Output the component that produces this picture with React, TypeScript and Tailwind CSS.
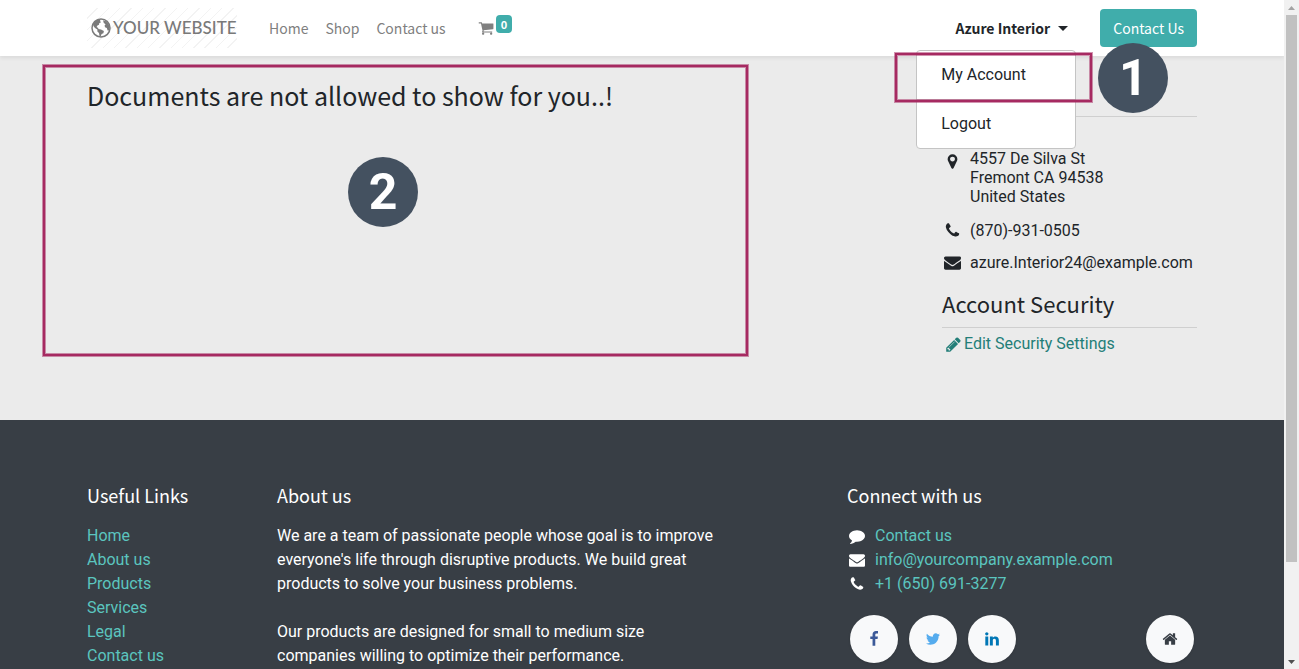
import React from "react";

const ICONS = {
  home: "M1472 992v480q0 26-19 45t-45 19h-384v-384h-256v384h-384q-26 0-45-19t-19-45v-480q0-1 .5-3t.5-3l575-474 575 474q1 2 1 6zm223-69l-62 74q-8 9-21 11h-3q-13 0-21-7l-692-577-692 577q-12 8-24 7-13-2-21-11l-62-74q-8-10-7-23.5t11-21.5l719-599q32-26 76-26t76 26l244 204v-195q0-14 9-23t23-9h192q14 0 23 9t9 23v408l219 182q10 8 11 21.5t-7 23.5z",
  envelope:
    "M1792 710v794q0 66-47 113t-113 47h-1472q-66 0-113-47t-47-113v-794q44 49 101 87 362 246 497 345 57 42 92.5 65.5t94.5 48 110 24.5h2q51 0 110-24.5t94.5-48 92.5-65.5q170-123 498-345 57-39 100-87zm0-294q0 79-49 151t-122 123q-376 261-468 325-10 7-42.5 31t-54 38.5-52 32.5-57.5 27-50 9h-2q-23 0-50-9t-57.5-27-52-32.5-54-38.5-42.5-31q-91-64-262-182.5t-205-142.5q-62-42-117-115.5t-55-136.5q0-78 41.5-130t118.5-52h1472q65 0 112.5 47t47.5 113z",
  phone:
    "M1600 1240q0 27-10 70.5t-21 68.5q-21 50-122 106-94 51-186 51-27 0-52.5-3.5t-57.5-12.5-47.5-14.5-55.5-20.5-49-18q-98-35-175-83-128-79-264.5-215.5t-215.5-264.5q-48-77-83-175-3-9-18-49t-20.5-55.5-14.5-47.5-12.5-57.5-3.5-52.5q0-92 51-186 56-101 106-122 25-11 68.5-21t70.5-10q14 0 21 3 18 6 53 76 11 19 30 54t35 63.5 31 53.5q3 4 17.5 25t21.5 35.5 7 28.5q0 20-28.5 50t-62 55-62 53-28.5 46q0 9 5 22.5t8.5 20.5 14 24 11.5 19q76 137 174 235t235 174q2 1 19 11.5t24 14 20.5 8.5 22.5 5q18 0 46-28.5t53-62 55-62 50-28.5q14 0 28.5 7t35.5 21.5 25 17.5q25 15 53.5 31t63.5 35 54 30q70 35 76 53 3 7 3 21z",
  marker:
    "M1152 640q0-106-75-181t-181-75-181 75-75 181 75 181 181 75 181-75 75-181zm256 0q0 109-33 179l-364 774q-16 33-47.5 52t-67.5 19-67.5-19-46.5-52l-365-774q-33-70-33-179 0-212 150-362t362-150 362 150 150 362z",
  comment:
    "M1792 896q0 174-120 321.5t-326 233-450 85.5q-70 0-145-8-198 175-460 242-49 14-114 22-17 2-30.5-9t-17.5-29v-1q-3-4-.5-12t2-10 4.5-9.5l6-9 7-8.5 8-9q7-8 31-34.5t34.5-38 31-39.5 32.5-51 27-59 26-76q-157-89-247.5-220t-90.5-281q0-130 71-248.5t191-204.5 286-136.5 348-50.5 348 50.5 286 136.5 191 204.5 71 248.5z",
  pencil:
    "M491 1536l91-91-235-235-91 91v107h128v128h107zm523-928q0-22-22-22-10 0-17 7l-542 542q-7 7-7 17 0 22 22 22 10 0 17-7l542-542q7-7 7-17zm-54-192l416 416-832 832h-416v-416zm683 96q0 53-37 90l-166 166-416-416 166-165q36-38 90-38 53 0 91 38l235 234q37 39 37 91z",
  cart: "M704 1536q0 52-38 90t-90 38-90-38-38-90 38-90 90-38 90 38 38 90zm896 0q0 52-38 90t-90 38-90-38-38-90 38-90 90-38 90 38 38 90zm128-1088v512q0 24-16.5 42.5t-40.5 21.5l-1044 122q13 60 13 70 0 16-24 64h920q26 0 45 19t19 45-19 45-45 19h-1024q-26 0-45-19t-19-45q0-11 8-31.5t16-36 21.5-40 15.5-29.5l-177-823h-204q-26 0-45-19t-19-45 19-45 45-19h256q16 0 28.5 6.5t19.5 15.5 13 24.5 8 26 5.5 29.5 4.5 26h1201q26 0 45 19t19 45z",
  twitter:
    "M1684 408q-67 98-162 167 1 14 1 42 0 130-38 259.5t-115.5 248.5-184.5 210.5-258 146-323 54.5q-271 0-496-145 35 4 78 4 225 0 401-138-105-2-188-64.5t-114-159.5q33 5 61 5 43 0 85-11-112-23-185.5-111.5t-73.5-205.5v-4q68 38 146 41-66-44-105-115t-39-154q0-88 44-163 121 149 294.5 238.5t371.5 99.5q-8-38-8-74 0-134 94.5-228.5t228.5-94.5q140 0 236 102 109-21 205-78-37 115-142 178 93-10 186-50z",
  facebook:
    "M1343 12v264h-157q-86 0-116 36t-30 108v189h293l-39 296h-254v759h-306v-759h-255v-296h255v-218q0-186 104-288.5t277-102.5q147 0 228 12z",
  linkedin:
    "M477 625v991h-330v-991h330zm21-306q1 73-50.5 122t-135.5 49h-2q-82 0-132-49t-50-122q0-74 51.5-122.5t134.5-48.5 133 48.5 51 122.5zm1166 729v568h-329v-530q0-105-40.5-164.5t-126.5-59.5q-63 0-105.5 34.5t-63.5 85.5q-11 30-11 81v553h-329q2-399 2-647t-1-296l-1-48h329v144h-2q20-32 41-56t56.5-52 87-43.5 114.5-15.5q171 0 275 113.5t104 332.5z",
};

function Icon({ name, className = "size-4" }: { name: keyof typeof ICONS; className?: string }) {
  return (
    <svg viewBox="0 0 1792 1792" className={`shrink-0 ${className}`} fill="currentColor" aria-hidden="true">
      <path d={ICONS[name]} />
    </svg>
  );
}

const HEADING = "font-['Noto_Sans_CJK_SC',sans-serif]";

function Logo() {
  return (
    <a
      href="#"
      className="flex h-10 w-[150px] items-center gap-[2px] bg-[repeating-linear-gradient(135deg,#fff_0px,#fff_7px,#f3f3f3_7px,#f3f3f3_8px)] pl-1 font-['Lato',sans-serif] text-[17px] text-[#797979]"
    >
      <svg viewBox="0 0 20 20" className="size-5 shrink-0" aria-hidden="true">
        <circle cx="10" cy="10" r="9" fill="#fff" stroke="#7b7b7b" strokeWidth="1.5" />
        <path
          fill="#7b7b7b"
          d="M2 6 4 3.2 7 1.400 9.600 1.600 9 3 10 4.200 8.200 5.200 8 6.800 6.400 7.400 5.600 9 7.200 10 7.400 11 10 11.400 12.900 13 12.400 15.200 10.600 16 9.600 18.600 8.600 18.400 8 15 6.400 13.400 6.400 11.400 4 10 2.400 8zM12 2.200 15 3.200 17.600 6 18.800 9.600 18 12.600 16.600 12.400 15.800 10 14 9.200 13.600 7.400 14.600 6.200 12.800 5z"
        />
      </svg>
      <span className="font-medium whitespace-nowrap">YOUR WEBSITE</span>
    </a>
  );
}

function Marker({ label }: { label: string }) {
  return (
    <span className="flex size-[70px] items-center justify-center rounded-full bg-[#445160] font-['Roboto',sans-serif] text-[50px] leading-none font-bold text-white">
      {label}
    </span>
  );
}

const FRAME =
  "pointer-events-none border-2 border-[#a62a61] shadow-[0_0_0_1px_#a62a6180,inset_0_0_0_1px_#a62a6180]";

function Header() {
  return (
    <header className="relative z-10 h-14 bg-white shadow-[0_2px_4px_rgba(0,0,0,0.075)]">
      <nav className={`mx-auto flex h-full max-w-[1110px] items-center text-[14px] leading-6 ${HEADING}`}>
        <Logo />
        <ul className="ml-8 flex gap-[17px] text-[#808080]">
          <li><a href="#">Home</a></li>
          <li><a href="#">Shop</a></li>
          <li><a href="#">Contact us</a></li>
        </ul>
        <a href="#" aria-label="Cart" className="ml-8 flex items-center gap-[2px] text-[#808080]">
          <Icon name="cart" />
          <span className="mb-2 rounded-sm bg-[#40adab] px-[5px] text-[11px] leading-[18px] font-bold text-white">0</span>
        </a>
        <div className="relative ml-auto">
          <button type="button" className="flex items-center gap-2 font-bold text-[#212529]">
            Azure Interior
            <svg viewBox="0 0 10 5" className="h-[5px] w-[10px]" fill="currentColor" aria-hidden="true">
              <path d="M0 0h10L5 5z" />
            </svg>
          </button>
          <ul className="absolute top-[34px] right-[-8px] w-40 rounded-sm border border-[#c4c4c4] bg-white font-['Roboto',sans-serif] text-base leading-6 text-[#212529]">
            <li className="border-b border-[#ccc]"><a href="#" className="block px-6 py-3">My Account</a></li>
            <li><a href="#" className="block px-6 py-3">Logout</a></li>
          </ul>
          <div className={`absolute top-[37px] right-[-24px] h-[49px] w-[197px] ${FRAME}`} />
          <div className="absolute top-[27px] right-[-100px]">
            <Marker label="1" />
          </div>
        </div>
        <a href="#" className="ml-8 rounded-sm bg-[#40adab] px-[13px] py-[7px] text-white">Contact Us</a>
      </nav>
    </header>
  );
}

function Account() {
  return (
    <main className="relative h-[364px] text-[#212529]">
      <div className="mx-auto flex max-w-[1110px] justify-between">
        <h1 className={`pt-5 text-[25px] leading-[38px] ${HEADING}`}>Documents are not allowed to show for you..!</h1>
        <aside className="w-[255px] pt-[60px]">
          <hr className="border-[#cfcfcf]" />
          <address className="mt-8 flex flex-col leading-[19px] not-italic">
            <div className="flex gap-[9px] pl-[2px]">
              <Icon name="marker" className="mt-1 size-[17px]" />
              <p>4557 De Silva St<br />Fremont CA 94538<br />United States</p>
            </div>
            <div className="mt-[15px] flex items-center gap-[9px] pl-[2px]">
              <Icon name="phone" className="size-[17px]" />
              (870)-931-0505
            </div>
            <div className="mt-[13px] flex items-center gap-[9px] pl-[2px]">
              <Icon name="envelope" className="size-[17px]" />
              azure.Interior24@example.com
            </div>
          </address>
          <h2 className={`mt-4 border-b border-[#cfcfcf] pb-[9px] text-[22px] leading-[30px] ${HEADING}`}>Account Security</h2>
          <a href="#" className="mt-1 flex items-center gap-[2px] pl-[3px] leading-6 text-[#237e78]">
            <Icon name="pencil" className="size-[17px]" />
            Edit Security Settings
          </a>
        </aside>
      </div>
      <div className="absolute inset-0 mx-auto max-w-[1198px]">
        <div className={`mt-[9px] h-[291px] w-[705px] ${FRAME}`}>
          <div className="ml-[303px] pt-[90px]">
            <Marker label="2" />
          </div>
        </div>
      </div>
    </main>
  );
}

const LINKS = ["Home", "About us", "Products", "Services", "Legal", "Contact us"];

const CIRCLE = "flex size-12 items-center justify-center rounded-full bg-[#f8f9fa] shadow-sm";

function Footer() {
  const title = `mb-[18px] text-[18px] leading-[22px] ${HEADING}`;
  return (
    <footer className="grow bg-[#383e45] pt-16 text-white">
      <div className="mx-auto grid max-w-[1110px] grid-cols-[190px_minmax(0,445px)_1fr] leading-6">
        <section>
          <h5 className={title}>Useful Links</h5>
          <ul className="text-[#5bc5bf]">
            {LINKS.map((link) => (
              <li key={link}><a href="#">{link}</a></li>
            ))}
          </ul>
        </section>
        <section>
          <h5 className={title}>About us</h5>
          <p>
            We are a team of passionate people whose goal is to improve everyone's life through disruptive products.
            We build great products to solve your business problems.
          </p>
          <p className="mt-6">
            Our products are designed for small to medium size companies willing to optimize their performance.
          </p>
        </section>
        <section className="ml-auto w-[350px]">
          <h5 className={title}>Connect with us</h5>
          <ul>
            <li className="flex items-center gap-[10px] pl-[2px]"><Icon name="comment" /><a href="#" className="text-[#5bc5bf]">Contact us</a></li>
            <li className="flex items-center gap-[10px] pl-[2px]"><Icon name="envelope" /><a href="#" className="text-[#5bc5bf]">info@yourcompany.example.com</a></li>
            <li className="flex items-center gap-[10px] pl-[2px]"><Icon name="phone" /><a href="#" className="text-[#5bc5bf]">+1 (650) 691-3277</a></li>
          </ul>
          <div className="mt-[19px] flex gap-[11px] px-[3px]">
            <a href="#" aria-label="Facebook" className={`${CIRCLE} text-[#3b5998]`}><Icon name="facebook" /></a>
            <a href="#" aria-label="Twitter" className={`${CIRCLE} text-[#55acee]`}><Icon name="twitter" /></a>
            <a href="#" aria-label="LinkedIn" className={`${CIRCLE} text-[#0077b5]`}><Icon name="linkedin" /></a>
            <a href="#" aria-label="Home page" className={`${CIRCLE} ml-auto text-[#383e45]`}><Icon name="home" /></a>
          </div>
        </section>
      </div>
    </footer>
  );
}

function Scrollbar() {
  return (
    <div className="flex w-[15px] shrink-0 flex-col items-center bg-[#f1f1f1]" aria-hidden="true">
      <svg viewBox="0 0 15 15" className="size-[15px]"><path d="M4 10h7L7.500 6z" fill="#a3a3a3" /></svg>
      <div className="h-[547px] w-[11px] bg-[#c1c1c1]" />
      <svg viewBox="0 0 15 15" className="mt-auto size-[15px]"><path d="M4 6h7L7.500 10z" fill="#505050" /></svg>
    </div>
  );
}

export default function App() {
  return (
    <div className="flex h-screen overflow-hidden bg-[#ebebeb] font-['Roboto',sans-serif] text-base">
      <div className="flex min-w-0 grow flex-col overflow-hidden">
        <Header />
        <Account />
        <Footer />
      </div>
      <Scrollbar />
    </div>
  );
}
